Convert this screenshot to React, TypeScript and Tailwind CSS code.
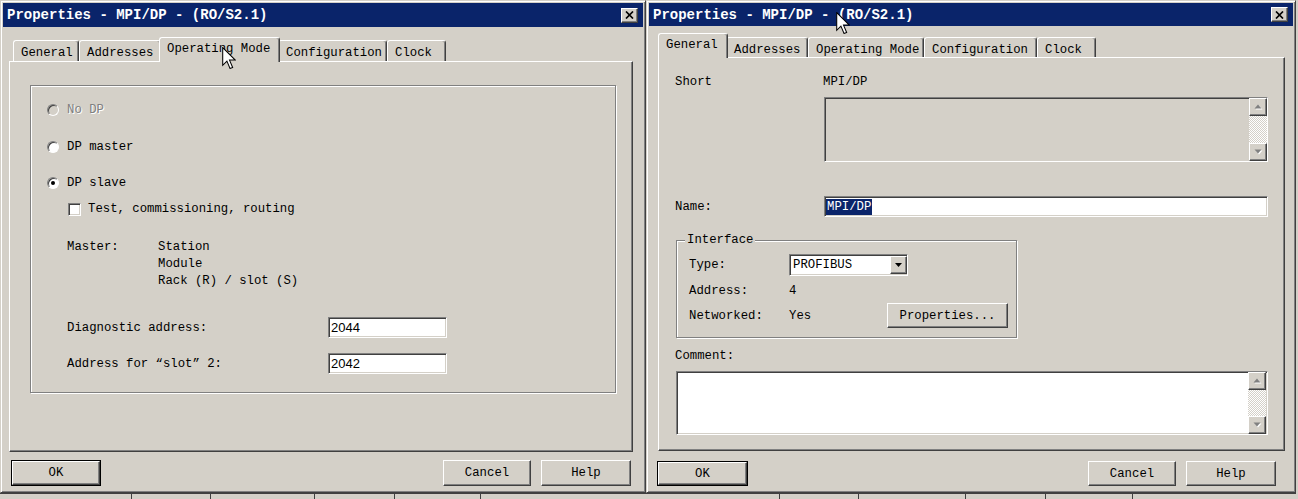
import type { ReactNode } from "react";

type Tab = { label: string; w: string; sw?: string };

const raised =
  "border border-t-white border-l-white border-r-[#404040] border-b-[#404040] shadow-[inset_-1px_-1px_#808080]";
const sunken =
  "border border-t-[#808080] border-l-[#808080] border-r-white border-b-white shadow-[inset_1px_1px_#404040,inset_-1px_-1px_#d4d0c8]";
const etched = "border border-[#808080] shadow-[inset_1px_1px_#ffffff,1px_1px_#ffffff]";

function CloseButton() {
  return (
    <div className={`w-[17px] h-[15px] bg-[#d4d0c8] ${raised} flex items-center justify-center`}>
      <svg width="9" height="8" viewBox="0 0 9 8">
        <path d="M1 0.5l7 7M8 0.5l-7 7" stroke="#000" strokeWidth="1.7" />
      </svg>
    </div>
  );
}

function TitleBar({ h }: { h: string }) {
  return (
    <div className={`flex items-center justify-between bg-[#0a246a] pl-[4px] pr-[5px] ${h}`}>
      <span className="text-[14px] leading-none font-bold text-white whitespace-pre">
        Properties - MPI/DP - (RO/S2.1)
      </span>
      <CloseButton />
    </div>
  );
}

function TabStrip({
  tabs,
  selected,
  className,
  tabH,
  selH,
}: {
  tabs: Tab[];
  selected: number;
  className: string;
  tabH: string;
  selH: string;
}) {
  return (
    <div className={`flex items-end relative z-10 ${className}`}>
      {tabs.map((t, i) =>
        i === selected ? (
          <div
            key={t.label}
            className={`${t.sw} ${selH} -mx-[2px] -mb-px relative z-10 bg-[#d4d0c8] border-t border-l border-r border-t-white border-l-white border-r-[#404040] shadow-[inset_-1px_0_#808080] rounded-t-[3px] pl-[7px] pt-[3px] whitespace-pre`}
          >
            {t.label}
          </div>
        ) : (
          <div
            key={t.label}
            className={`${t.w} ${tabH} border-t border-l border-r border-t-white border-l-white border-r-[#404040] shadow-[inset_-1px_0_#808080] rounded-t-[3px] pl-[7px] pt-[4px] whitespace-pre`}
          >
            {t.label}
          </div>
        )
      )}
    </div>
  );
}

function Button({ label, w, isDefault }: { label: string; w: string; isDefault?: boolean }) {
  return isDefault ? (
    <div className={`${w} h-full border border-black flex`}>
      <div className={`flex-1 ${raised} flex items-center justify-center`}>{label}</div>
    </div>
  ) : (
    <div className={`${w} h-full ${raised} flex items-center justify-center`}>{label}</div>
  );
}

function Radio({ checked, disabled }: { checked?: boolean; disabled?: boolean }) {
  return (
    <div
      className={`w-[12px] h-[12px] rounded-full border border-t-[#808080] border-l-[#808080] border-r-white border-b-white shadow-[inset_1px_1px_#404040] flex items-center justify-center ${
        disabled ? "bg-[#d4d0c8]" : "bg-white"
      }`}
    >
      {checked && <div className="w-[4px] h-[4px] rounded-full bg-black" />}
    </div>
  );
}

function ScrollButton({ up }: { up?: boolean }) {
  return (
    <div className={`w-[18px] h-[18px] bg-[#d4d0c8] ${raised} flex items-center justify-center`}>
      <svg width="9" height="6" viewBox="0 0 9 6">
        {up ? (
          <>
            <path d="M1.5 5.5h7l-3.5-4z" fill="#fff" />
            <path d="M0.5 4.5h7l-3.5-4z" fill="#808080" />
          </>
        ) : (
          <>
            <path d="M1.5 1.5h7l-3.5 4z" fill="#fff" />
            <path d="M0.5 0.5h7l-3.5 4z" fill="#808080" />
          </>
        )}
      </svg>
    </div>
  );
}

function ScrollBar() {
  return (
    <div className="w-[18px] h-full flex flex-col">
      <ScrollButton up />
      <div className="flex-1 bg-[image:repeating-conic-gradient(#d4d0c8_0_25%,#ffffff_0_50%)] bg-[length:2px_2px]" />
      <ScrollButton />
    </div>
  );
}

function Cursor() {
  return (
    <svg width="14" height="22" viewBox="0 0 13 21">
      <path
        d="M0.5 0.5V17.5L4.5 13.5L7.5 20.5L10 19.5L7 12.5H12.5Z"
        fill="#fff"
        stroke="#000"
        strokeWidth="1"
        strokeLinejoin="miter"
      />
    </svg>
  );
}

function BottomStrip({ lines }: { lines: string[] }) {
  return (
    <div className="h-[6px] flex border-t border-[#404040] bg-[#d4d0c8]">
      {lines.map((w, i) => (
        <div key={i} className={`${w} h-full border-r border-[#404040]`} />
      ))}
    </div>
  );
}

function Dialog({
  w,
  children,
}: {
  w: string;
  children: ReactNode;
}) {
  return (
    <div
      className={`${w} h-[493px] flex flex-col bg-[#d4d0c8] border border-t-[#d4d0c8] border-l-[#d4d0c8] border-r-[#404040] border-b-[#404040] shadow-[inset_1px_1px_#ffffff,inset_-1px_-1px_#808080] p-[2px]`}
    >
      {children}
    </div>
  );
}

const leftTabs: Tab[] = [
  { label: "General", w: "w-[66px]" },
  { label: "Addresses", w: "w-[82px]" },
  { label: "Operating Mode", w: "w-[117px]", sw: "w-[121px]" },
  { label: "Configuration", w: "w-[109px]" },
  { label: "Clock", w: "w-[59px]" },
];

const rightTabs: Tab[] = [
  { label: "General", w: "w-[66px]", sw: "w-[70px]" },
  { label: "Addresses", w: "w-[82px]" },
  { label: "Operating Mode", w: "w-[116px]" },
  { label: "Configuration", w: "w-[113px]" },
  { label: "Clock", w: "w-[59px]" },
];

function LeftDialog() {
  return (
    <Dialog w="w-[646px]">
      <TitleBar h="h-[24px]" />
      <div className="ml-[6px] w-[624px] flex flex-col">
        <TabStrip tabs={leftTabs} selected={2} className="h-[24px] mt-[10px] pl-[4px]" tabH="h-[21px]" selH="h-[25px]" />
        <div className={`h-[391px] ${raised} pt-[23px] pl-[20px]`}>
          <div className={`w-[586px] h-[308px] ${etched} flex flex-col`}>
            <div className="mt-[16px] pl-[16px] h-[16px] flex items-center gap-[8px]">
              <Radio disabled />
              <span className="text-[#808080] [text-shadow:1px_1px_#ffffff]">No DP</span>
            </div>
            <div className="mt-[21px] pl-[16px] h-[16px] flex items-center gap-[8px]">
              <Radio />
              <span>DP master</span>
            </div>
            <div className="mt-[20px] pl-[16px] h-[16px] flex items-center gap-[8px]">
              <Radio checked />
              <span>DP slave</span>
            </div>
            <div className="mt-[10px] pl-[37px] h-[16px] flex items-center gap-[7px]">
              <div className={`w-[13px] h-[13px] bg-white ${sunken}`} />
              <span>Test, commissioning, routing</span>
            </div>
            <div className="mt-[21px] pl-[36px] grid grid-cols-[91px_1fr] leading-[18px]">
              <span>Master:</span>
              <span>Station</span>
              <span />
              <span className="-mt-px">Module</span>
              <span />
              <span className="-mt-[1px]">Rack (R) / slot (S)</span>
            </div>
            <div className="mt-[27px] pl-[36px] h-[21px] flex items-center">
              <span className="w-[261px]">Diagnostic address:</span>
              <div className={`w-[119px] h-[21px] bg-white ${sunken} pl-[2px] font-['Liberation_Sans',sans-serif] text-[13px] leading-[19px]`}>
                2044
              </div>
            </div>
            <div className="mt-[15px] pl-[36px] h-[21px] flex items-center">
              <span className="w-[261px] whitespace-pre">Address for “slot” 2:</span>
              <div className={`w-[119px] h-[21px] bg-white ${sunken} pl-[2px] font-['Liberation_Sans',sans-serif] text-[13px] leading-[19px]`}>
                2042
              </div>
            </div>
          </div>
        </div>
        <div className="mt-[8px] h-[26px] flex px-[2px]">
          <Button label="OK" w="w-[90px]" isDefault />
          <div className="flex-1" />
          <Button label="Cancel" w="w-[88px]" />
          <div className="w-[10px]" />
          <Button label="Help" w="w-[90px]" />
        </div>
      </div>
    </Dialog>
  );
}

function RightDialog() {
  return (
    <Dialog w="w-[650px]">
      <TitleBar h="h-[23px]" />
      <div className="ml-[9px] w-[627px] flex flex-col">
        <TabStrip tabs={rightTabs} selected={0} className="h-[24px] mt-[7px] pl-[2px]" tabH="h-[20px]" selH="h-[25px]" />
        <div className={`h-[394px] ${raised} pt-[16px] pl-[16px] flex flex-col`}>
          <div className="h-[16px] flex items-center">
            <span className="w-[148px]">Short</span>
            <span>MPI/DP</span>
          </div>
          <div className={`mt-[7px] ml-[149px] w-[444px] h-[65px] ${sunken} flex justify-end`}>
            <ScrollBar />
          </div>
          <div className="mt-[34px] h-[21px] flex items-center">
            <span className="w-[149px]">Name:</span>
            <div className={`w-[444px] h-[21px] bg-white ${sunken} pl-[1px] flex items-center`}>
              <span className="bg-[#0a246a] text-white leading-[16px] px-px">MPI/DP</span>
            </div>
          </div>
          <div className={`relative mt-[23px] ml-px w-[341px] h-[98px] ${etched} pl-[12px] flex flex-col`}>
            <span className="absolute -top-[9px] left-[8px] bg-[#d4d0c8] px-[2px]">Interface</span>
            <div className="mt-[13px] h-[22px] flex items-center">
              <span className="w-[100px]">Type:</span>
              <div className={`w-[119px] h-[22px] bg-white ${sunken} pl-[3px] flex items-center justify-between`}>
                <span>PROFIBUS</span>
                <div className={`w-[17px] h-[18px] bg-[#d4d0c8] ${raised} flex items-center justify-center`}>
                  <svg width="7" height="4" viewBox="0 0 7 4">
                    <path d="M0 0h7l-3.5 4z" fill="#000" />
                  </svg>
                </div>
              </div>
            </div>
            <div className="mt-[7px] h-[16px] flex items-center">
              <span className="w-[100px]">Address:</span>
              <span>4</span>
            </div>
            <div className="mt-[4px] h-[25px] flex items-center">
              <span className="w-[100px]">Networked:</span>
              <span className="w-[98px]">Yes</span>
              <Button label="Properties..." w="w-[121px]" />
            </div>
          </div>
          <div className="mt-[10px] h-[16px] flex items-center">
            <span>Comment:</span>
          </div>
          <div className={`mt-[7px] ml-px w-[592px] h-[64px] bg-white ${sunken} flex justify-end pr-[1px]`}>
            <ScrollBar />
          </div>
        </div>
        <div className="mt-[10px] h-[25px] flex -ml-[1px] mr-[9px]">
          <Button label="OK" w="w-[91px]" isDefault />
          <div className="flex-1" />
          <Button label="Cancel" w="w-[88px]" />
          <div className="w-[10px]" />
          <Button label="Help" w="w-[90px]" />
        </div>
      </div>
    </Dialog>
  );
}

export default function App() {
  return (
    <div className="relative w-[1298px] h-[499px] overflow-hidden bg-[#d4d0c8] text-black text-[12.3px] leading-[16px] font-['Liberation_Mono','DejaVu_Sans_Mono',monospace] select-none">
      <div className="flex">
        <div className="flex flex-col">
          <LeftDialog />
          <BottomStrip lines={["w-[132px]", "w-[79px]", "w-[104px]", "w-[80px]", "w-[86px]"]} />
        </div>
        <div className="flex flex-col">
          <RightDialog />
          <BottomStrip lines={["w-[134px]", "w-[79px]", "w-[107px]", "w-[80px]", "w-[87px]"]} />
        </div>
      </div>
      <div className="absolute z-30 left-[222px] top-[47px]">
        <Cursor />
      </div>
      <div className="absolute z-30 left-[836px] top-[12px]">
        <Cursor />
      </div>
    </div>
  );
}
